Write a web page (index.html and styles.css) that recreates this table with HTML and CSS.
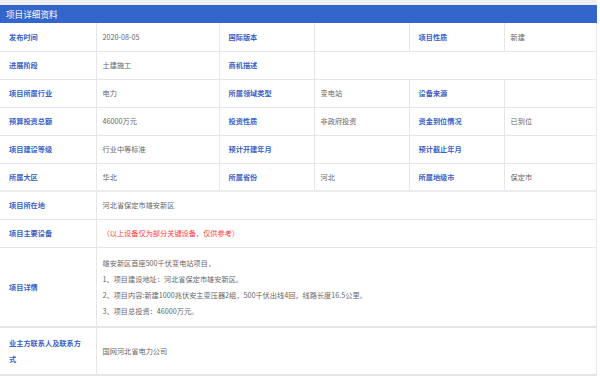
FILE: index.html
```html
<!DOCTYPE html>
<html lang="zh-CN">
<head>
    <meta charset="UTF-8">
    <meta name="viewport" content="width=device-width, initial-scale=1.0">
    <title>项目详细资料</title>
    <link rel="stylesheet" href="styles.css">
</head>
<body>
    <div class="page">
        <!-- 项目详细资料 -->
        <div class="detail-box">
            <h3 class="detail-title">项目详细资料</h3>
            <table class="detail-table">
                <colgroup>
                    <col class="w-label">
                    <col class="w-first">
                    <col class="w-col">
                    <col class="w-col">
                    <col class="w-col">
                    <col>
                </colgroup>
                <tr>
                    <td class="lbl">发布时间</td>
                    <td class="val">2020-08-05</td>
                    <td class="lbl">国际版本</td>
                    <td class="val"></td>
                    <td class="lbl">项目性质</td>
                    <td class="val">新建</td>
                </tr>
                <tr>
                    <td class="lbl">进展阶段</td>
                    <td class="val">土建施工</td>
                    <td class="lbl">商机描述</td>
                    <td class="val" colspan="3"></td>
                </tr>
                <tr>
                    <td class="lbl">项目所属行业</td>
                    <td class="val">电力</td>
                    <td class="lbl">所属领域类型</td>
                    <td class="val">变电站</td>
                    <td class="lbl">设备来源</td>
                    <td class="val"></td>
                </tr>
                <tr>
                    <td class="lbl">预算投资总额</td>
                    <td class="val">46000万元</td>
                    <td class="lbl">投资性质</td>
                    <td class="val">非政府投资</td>
                    <td class="lbl">资金到位情况</td>
                    <td class="val">已到位</td>
                </tr>
                <tr>
                    <td class="lbl">项目建设等级</td>
                    <td class="val">行业中等标准</td>
                    <td class="lbl">预计开建年月</td>
                    <td class="val"></td>
                    <td class="lbl">预计截止年月</td>
                    <td class="val"></td>
                </tr>
                <tr class="sect-end">
                    <td class="lbl">所属大区</td>
                    <td class="val">华北</td>
                    <td class="lbl">所属省份</td>
                    <td class="val">河北</td>
                    <td class="lbl">所属地级市</td>
                    <td class="val">保定市</td>
                </tr>
                <tr>
                    <td class="lbl">项目所在地</td>
                    <td class="val" colspan="5">河北省保定市雄安新区</td>
                </tr>
                <tr>
                    <td class="lbl">项目主要设备</td>
                    <td class="val note" colspan="5">（以上设备仅为部分关键设备，仅供参考）</td>
                </tr>
                <tr class="tall">
                    <td class="lbl">项目详情</td>
                    <td class="val text" colspan="5">
                        <p>雄安新区首座500千伏变电站项目，</p>
                        <p>1、项目建设地址：河北省保定市雄安新区。</p>
                        <p>2、项目内容:新建1000兆伏安主变压器2组，500千伏出线4回，线路长度16.5公里。</p>
                        <p>3、项目总投资：46000万元。</p>
                    </td>
                </tr>
                <tr class="tall">
                    <td class="lbl text wrap">业主方联系人及联系方式</td>
                    <td class="val" colspan="5">国网河北省电力公司</td>
                </tr>
            </table>
        </div>
    </div>
</body>
</html>
```

FILE: styles.css
```css
* { box-sizing: border-box; }
body { margin: 0; background: #fff; font-family: "Noto Sans CJK SC", "Noto Sans", sans-serif; }
.page { border-top: 5px solid #f0f0f0; width: 597px; }
.detail-title { margin: 0; height: 18px; line-height: 18px; padding: 0 6px; background: #3366cc; color: #fff; font-size: 8.6px; font-weight: normal; }
.detail-table { width: 597px; border-collapse: collapse; table-layout: fixed; font-size: 7.2px; }
.w-label { width: 96px; }
.w-first { width: 123px; }
.w-col { width: 95px; }
.detail-table td { height: 28px; border: 1px solid #e6e6e6; vertical-align: middle; padding: 0 6px; }
.detail-table tr:first-child td { border-top: none; }
.detail-table td:first-child { border-left: none; }
.lbl { color: #3b5fc8; font-weight: bold; padding-left: 9px !important; }
.val { color: #666; }
.note { color: #ff3b3b; }
.sect-end td { border-bottom: 2px solid #ececec; }
.tall td { border-bottom-width: 2px; }
.text { line-height: 16px; padding-top: 7px !important; padding-bottom: 7px !important; }
.text p { margin: 0; }
.wrap { padding-right: 14px !important; }
```
